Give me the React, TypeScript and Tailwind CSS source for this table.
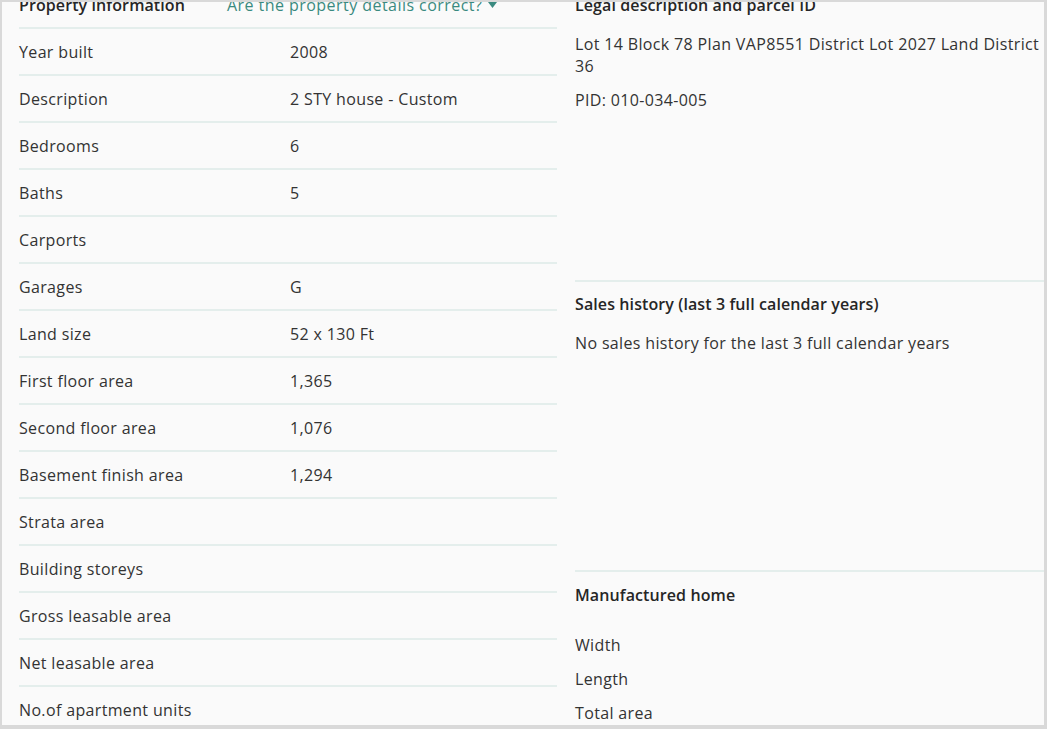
import React from 'react';

const rows: [string, string][] = [
  ['Year built', '2008'],
  ['Description', '2 STY house - Custom'],
  ['Bedrooms', '6'],
  ['Baths', '5'],
  ['Carports', ''],
  ['Garages', 'G'],
  ['Land size', '52 x 130 Ft'],
  ['First floor area', '1,365'],
  ['Second floor area', '1,076'],
  ['Basement finish area', '1,294'],
  ['Strata area', ''],
  ['Building storeys', ''],
  ['Gross leasable area', ''],
  ['Net leasable area', ''],
  ['No.of apartment units', ''],
];

function Row({ label, value }: { label: string; value: string }) {
  return (
    <div className="flex h-[47px] items-center border-b-2 border-[#e4eeec]">
      <div className="w-[271px]">{label}</div>
      <div>{value}</div>
    </div>
  );
}

export default function App() {
  return (
    <div className="h-[729px] w-[1047px] bg-[#d9d9d9] pt-[2px] pl-[2px] pr-[3px] pb-[4px] font-['Open_Sans',sans-serif] text-[16px] tracking-[0.35px] text-[#333333]">
      <div className="flex h-full overflow-hidden bg-[#fafafa]">
        {/* Property information */}
        <div className="-mt-[20px] w-[555px] shrink-0 pl-[17px]">
          <div className="flex h-[47px] items-center border-b-2 border-[#e4eeec]">
            <div className="w-[208px] font-semibold tracking-[0.1px] text-[#262626]">Property information</div>
            <div className="flex items-center gap-1.5 text-[#3a8a80] tracking-[0.45px]">
              Are the property details correct?
              <svg width="9" height="6" viewBox="0 0 9 6">
                <path d="M0 0h9L4.5 6z" fill="#3a8a80" />
              </svg>
            </div>
          </div>
          {rows.map(([l, v]) => (
            <Row key={l} label={l} value={v} />
          ))}
        </div>

        {/* Right column */}
        <div className="-mt-[20px] flex-1 pl-[18px]">
          <div className="h-[300px] border-b-2 border-[#e4eeec] pt-3 leading-[22px]">
            <h3 className="font-semibold tracking-[0.1px] text-[#262626]">Legal description and parcel ID</h3>
            <p className="mt-[17px] pr-1">Lot 14 Block 78 Plan VAP8551 District Lot 2027 Land District 36</p>
            <p className="mt-3">PID: 010-034-005</p>
          </div>
          <div className="h-[290px] border-b-2 border-[#e4eeec] pt-[11px] leading-[22px]">
            <h3 className="font-semibold tracking-[0.1px] text-[#262626]">Sales history (last 3 full calendar years)</h3>
            <p className="mt-[17px]">No sales history for the last 3 full calendar years</p>
          </div>
          <div className="pt-3 leading-[22px]">
            <h3 className="font-semibold tracking-[0.1px] text-[#262626]">Manufactured home</h3>
            <div className="mt-[28px] flex flex-col gap-3">
              <p>Width</p>
              <p>Length</p>
              <p>Total area</p>
            </div>
          </div>
        </div>
      </div>
    </div>
  );
}
